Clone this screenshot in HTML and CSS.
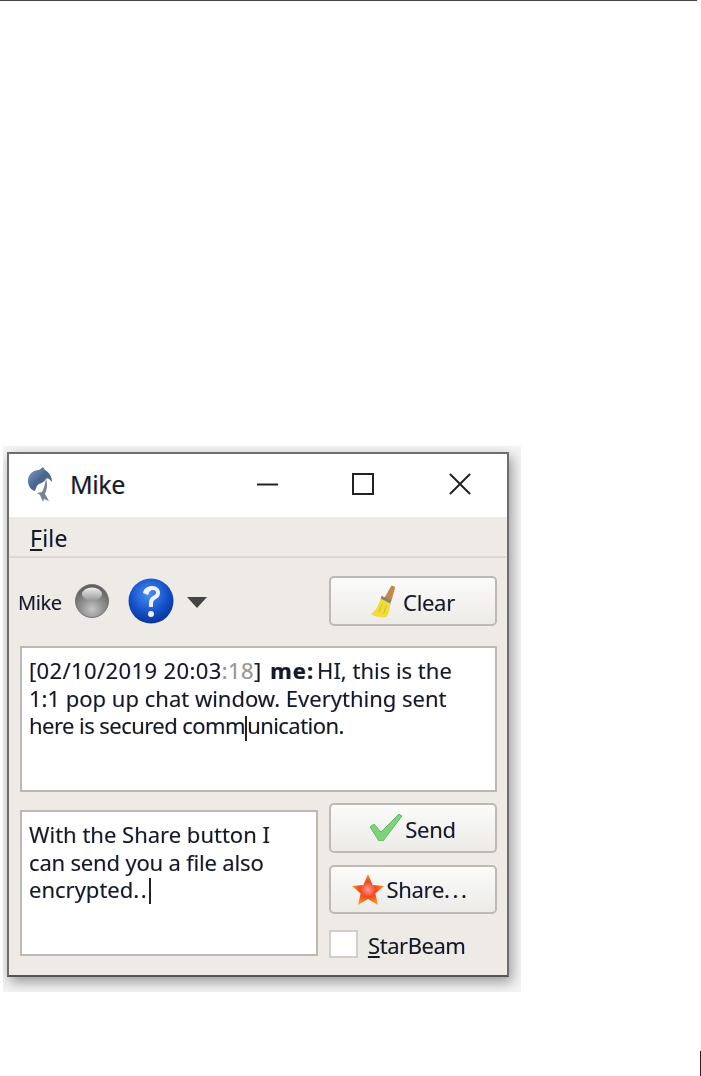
FILE: index.html
```html
<!DOCTYPE html>
<html lang="en">
<head>
<meta charset="utf-8">
<title>Mike</title>
<link rel="stylesheet" href="styles.css">
</head>
<body>
<div class="top-rule"></div>
<div class="shot">
  <div class="window">
    <header class="titlebar">
      <svg class="app-icon" viewBox="0 0 26 36">
        <defs><linearGradient id="dol" x1="0" y1="0" x2="1" y2="1"><stop offset="0" stop-color="#86a3c8"/><stop offset=".5" stop-color="#47668f"/><stop offset="1" stop-color="#5d6877"/></linearGradient></defs>
        <path d="M1 14C1 7 6 3 12 3l4-3 2 3c4 2 7 7 7 12l-3-3c-1-1-2-1-3 0-2 3-4 4-7 5-2 1-3 4-4 7C4 23 1 19 1 14Z" fill="url(#dol)"/>
        <path d="M19 12c2 5 1 10-1 15l4 7-5-2-1 3-3-7-3-2 5-1c2-4 3-8 4-13Z" fill="#7a8390"/>
      </svg>
      <span class="title">Mike</span>
      <div class="controls">
        <svg class="ctl ctl-min" viewBox="0 0 22 22"><path d="M0 11.5h21" stroke="#222" stroke-width="2" fill="none"/></svg>
        <svg class="ctl" viewBox="0 0 22 22"><rect x="1" y="1" width="20" height="20" stroke="#222" stroke-width="2" fill="none"/></svg>
        <svg class="ctl" viewBox="0 0 22 22"><path d="M1 1l20 20M21 1L1 21" stroke="#222" stroke-width="2" fill="none"/></svg>
      </div>
    </header>
    <nav class="menubar"><span class="menu-item"><u>F</u>ile</span></nav>
    <main class="content">
      <div class="toolbar">
        <span class="peer">Mike</span>
        <svg class="led" viewBox="0 0 34 34">
          <defs><radialGradient id="ledg" cx=".5" cy=".75" r=".7"><stop offset="0" stop-color="#c4c4c4"/><stop offset=".55" stop-color="#8a8a8a"/><stop offset="1" stop-color="#5e5e5e"/></radialGradient>
          <linearGradient id="ledh" x1="0" y1="0" x2="0" y2="1"><stop offset="0" stop-color="#eee"/><stop offset="1" stop-color="#999"/></linearGradient></defs>
          <circle cx="17" cy="17" r="16.5" fill="url(#ledg)" stroke="#777"/>
          <ellipse cx="17" cy="10" rx="10" ry="6.5" fill="url(#ledh)"/>
        </svg>
        <svg class="help" viewBox="0 0 46 46">
          <defs><radialGradient id="helpg" cx=".45" cy=".35" r=".7"><stop offset="0" stop-color="#4f8ff0"/><stop offset=".6" stop-color="#1250c8"/><stop offset="1" stop-color="#0a2f8c"/></radialGradient></defs>
          <circle cx="23" cy="23" r="22.5" fill="url(#helpg)"/>
          <path d="M15 15c1-5 5-7 9-7 5 0 8 3 8 7 0 3-2 5-4 6-2 1-3 2-3 5v3h-4v-4c0-4 2-6 4-7 2-1 3-2 3-3 0-2-1-3-3-3-3 0-4 2-5 5Z" fill="#eef3ff"/>
          <circle cx="23" cy="36" r="3" fill="#eef3ff"/>
        </svg>
        <svg class="drop" viewBox="0 0 20 11"><path d="M0 0h20L10 11Z" fill="#444"/></svg>
        <button class="btn btn-clear">
          <svg class="ico-broom" viewBox="0 0 26 34">
            <path d="M14 13L21 1c1-1 4 0 4 2l-4 14Z" fill="#c08a4a"/>
            <path d="M11 11l10 5-1 4-10-5Z" fill="#8d8466"/>
            <path d="M10 14l10 5c0 5-1 10-4 14-5 1-12 0-16-3 5-3 8-9 10-16Z" fill="#f2dc3c"/>
            <path d="M8 28l4-9M13 30l3-9" stroke="#d2b62a" fill="none"/>
          </svg>
          <span>Clear</span>
        </button>
      </div>
      <div class="history"><span class="date">[02/10/2019 20:03<span class="dim">:18</span>]</span> <b class="me">me:</b> HI, this is the<br>1:1 pop up chat window. Everything sent<br><span class="tight">here is secured comm<span class="pointer"></span>unication.</span></div>
      <div class="lower">
        <div class="input">With the Share button I<br><span class="snug">can send you a file also</span><br>encrypted<span class="dots">..</span><span class="caret"></span></div>
        <div class="actions">
          <button class="btn btn-send">
            <svg class="ico-check" viewBox="0 0 32 27"><path d="M0 13l4-3 7 8L29 0l3 2-19 25h-4Z" fill="#7fd47a" stroke="#58a858" stroke-width=".8"/></svg>
            <span>Send</span>
          </button>
          <button class="btn btn-share">
            <svg class="ico-star" viewBox="0 0 32 32">
              <defs><radialGradient id="stg" cx=".5" cy=".5" r=".55"><stop offset="0" stop-color="#ff9a9a"/><stop offset=".45" stop-color="#f2491c"/><stop offset="1" stop-color="#fba21e"/></radialGradient></defs>
              <path d="M16 0l4.600 11L32 12l-8.600 7.500L26 31l-10-6-10 6 2.600-11.500L0 12l11.400-1Z" fill="url(#stg)"/>
            </svg>
            <span>Share<span class="dots-wide">...</span></span>
          </button>
          <label class="check"><span class="box"></span><span class="check-label"><u>S</u>tarBeam</span></label>
        </div>
      </div>
    </main>
  </div>
</div>
<div class="bottom-rule"></div>
</body>
</html>
```
FILE: styles.css
```css
* { box-sizing: border-box; }
html, body { margin: 0; padding: 0; background: #fff; }
body { height: 1076px; overflow: hidden; font-family: "Noto Sans", "Open Sans", sans-serif; color: #141a28; }
.top-rule { height: 1px; margin-right: 4px; background: #444; }
.bottom-rule { width: 1px; height: 25px; margin: 59px 0 0 700px; background: #222; }
.shot { width: 518px; height: 546px; margin: 445px 0 0 3px; padding: 6px 12px 15px 4px; overflow: hidden; background: #f4f4f4; }
.window { width: 502px; height: 525px; display: flex; flex-direction: column; border: 2px solid #6e6e6e; border-bottom-color: #555; background: #eeebe6; box-shadow: 3px 5px 12px rgba(0,0,0,.38); filter: blur(.6px); text-shadow: .6px 0 rgba(40,110,230,.28), -.6px 0 rgba(240,140,20,.28); }
.titlebar { height: 63px; flex: none; display: flex; align-items: center; padding-left: 18px; background: #fff; }
.app-icon { width: 26px; height: 36px; margin-top: -2px; }
.title { margin: -3px 0 0 17px; font-size: 25px; letter-spacing: -.4px; }
.controls { margin: -3px 36px 0 auto; display: flex; gap: 75px; }
.ctl { width: 22px; height: 22px; }
.ctl-min { margin-right: -2px; }
.menubar { height: 41px; flex: none; display: flex; align-items: center; padding-left: 21px; border-bottom: 2px solid #dcd9d3; }
.menu-item { margin-top: 2px; font-size: 23px; letter-spacing: .2px; }
.content { flex: 1; padding: 18px 10px 0 11px; display: flex; flex-direction: column; }
.toolbar { height: 50px; display: flex; align-items: center; flex: none; }
.peer { margin: 2px 0 0 -2px; font-size: 20px; letter-spacing: -.4px; width: 44px; }
.led { width: 34px; height: 34px; margin-left: 13px; }
.help { width: 46px; height: 46px; margin-right: -2px; margin-left: 19px; }
.drop { width: 20px; height: 11px; margin: 3px 0 0 15px; }
.btn { display: flex; align-items: center; justify-content: center; gap: 3px; height: 50px; width: 168px; padding: 0; border: 2px solid #bdbab5; border-radius: 5px; background: linear-gradient(#fbfbfa, #ecebe8); font: inherit; font-size: 22px; letter-spacing: -.3px; color: inherit; text-shadow: inherit; }
.btn > span { margin-top: 2px; }
.btn-clear { margin-left: auto; gap: 7px; }
.btn-share { gap: 2px; height: 49px; padding-right: 4px; }
.btn-share > span { margin-top: -2px; }
.dots-wide { letter-spacing: 2.600px; }
.ico-broom { width: 25px; height: 33px; }
.ico-check { width: 32px; height: 27px; margin-top: -2px; }
.ico-star { width: 32px; height: 32px; }
.history, .input { background: #fff; border: 2px solid #bcb9b4; padding: 9px 7px; font-size: 22px; line-height: 27.500px; white-space: nowrap; }
.history { height: 146px; margin-top: 20px; flex: none; }
.date { letter-spacing: .38px; }
.dim { color: #9a9a9a; }
.me { display: inline-block; line-height: 20px; font-size: 22px; font-weight: 700; letter-spacing: 1.100px; margin: 0 -3px 0 3px; -webkit-text-stroke: .2px currentColor; }
.tight { letter-spacing: -.55px; }
.snug { letter-spacing: -.18px; }
.dots { letter-spacing: 1.500px; }
.pointer { display: inline-block; width: 0; height: 25px; margin-bottom: -7px; border-left: 2px solid #222; }
.caret { display: inline-block; width: 0; height: 26px; margin: 0 0 -6px 1px; border-left: 2px solid #222; }
.lower { display: grid; grid-template-columns: 298px 168px; column-gap: 11px; margin-top: 11px; }
.input { height: 146px; margin-top: 7px; }
.actions { display: flex; flex-direction: column; gap: 12px; }
.check { display: flex; align-items: center; gap: 10px; margin-top: 2px; font-size: 22px; letter-spacing: -.45px; }
.check-label { margin-top: 2px; }
.box { width: 29px; height: 28px; background: #fff; border: 2px solid #d2cfca; }
```
